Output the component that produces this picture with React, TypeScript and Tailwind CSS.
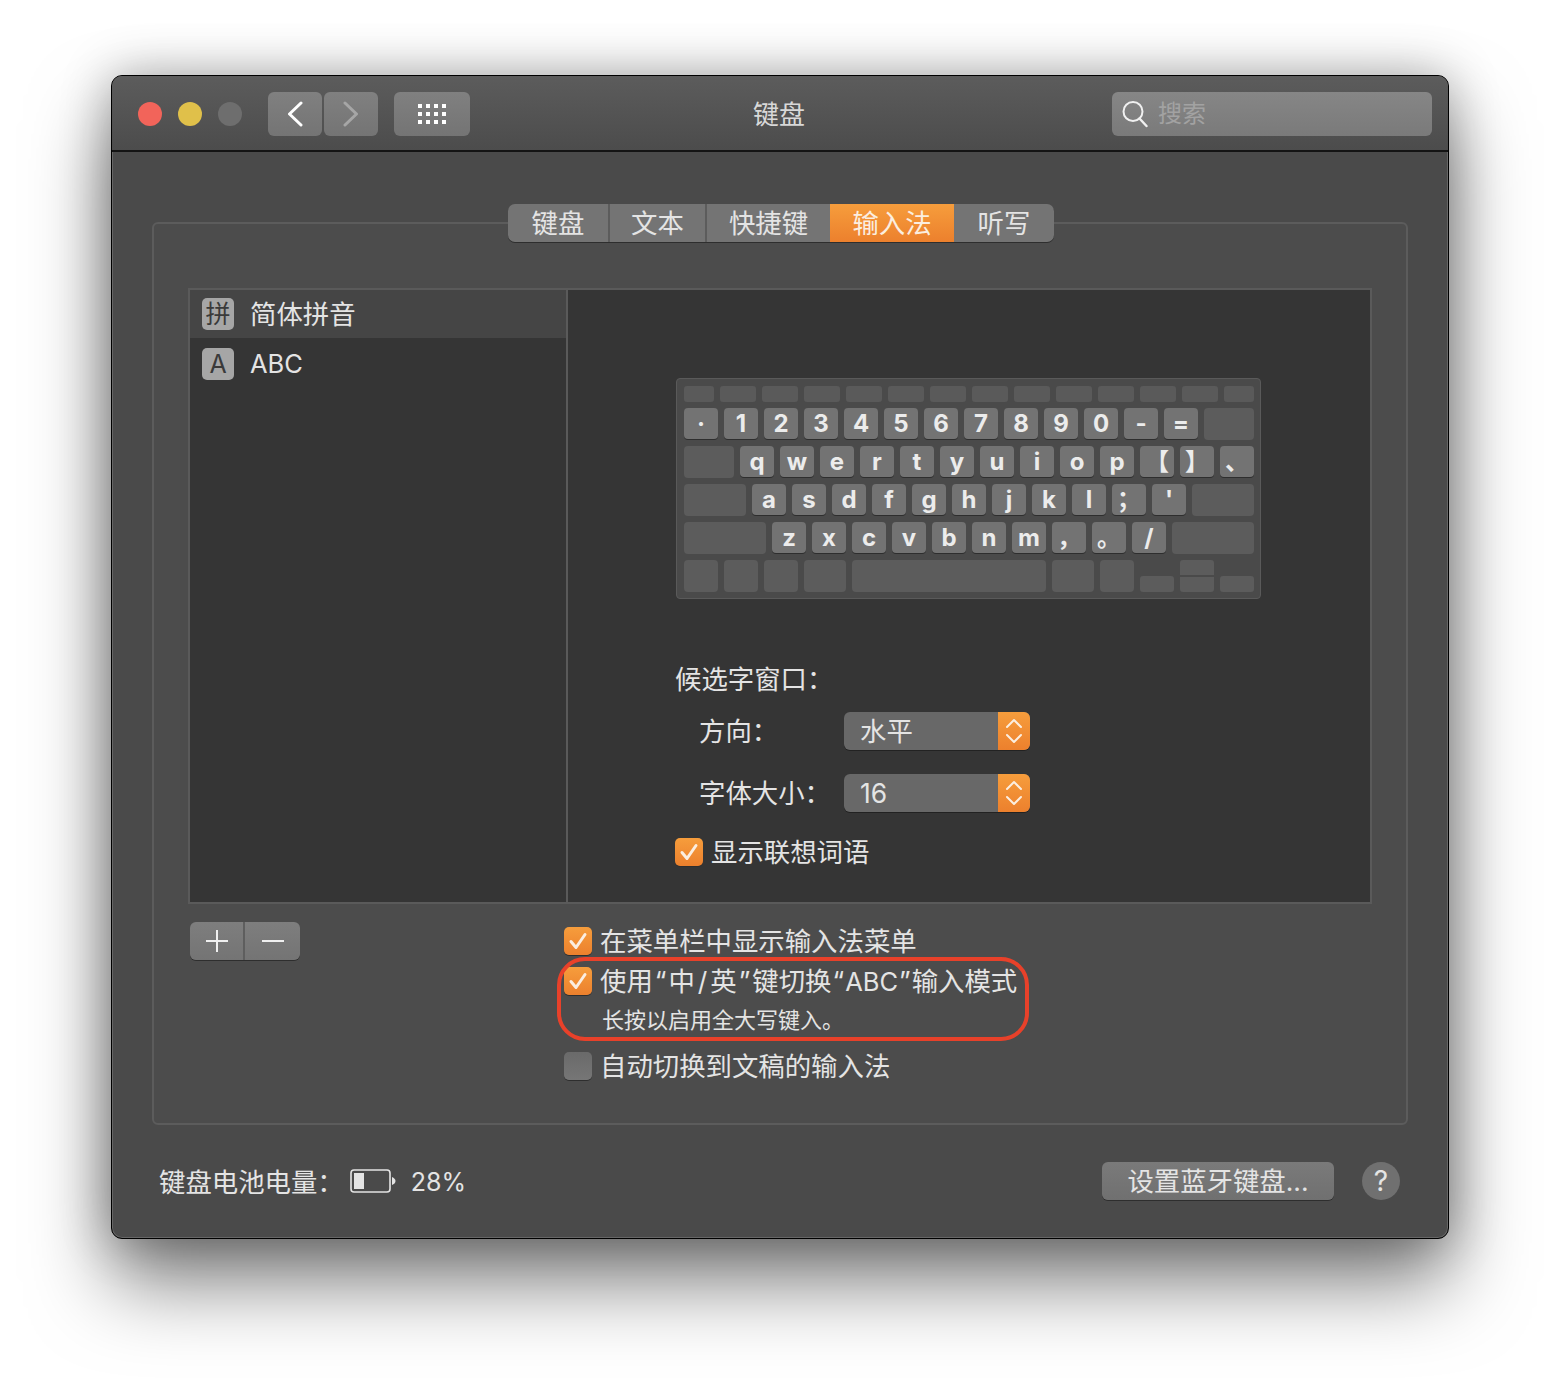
import React from 'react';

const fnKeys = ['w-[30px]', 'w-[36px]', 'w-[36px]', 'w-[36px]', 'w-[36px]', 'w-[36px]', 'w-[36px]', 'w-[36px]', 'w-[36px]', 'w-[36px]', 'w-[36px]', 'w-[36px]', 'w-[36px]', 'w-[30px]'];

const Key = ({ label }: { label: string }) => (
  <div className="flex h-[31px] w-[34px] shrink-0 items-center justify-center rounded-[4px] bg-[#737373] text-[24px] font-bold leading-none text-[#ececec] shadow-[0_1px_0_#2e2e2e]">
    {label}
  </div>
);

const BlankKey = ({ className }: { className: string }) => (
  <div className={`h-[32px] shrink-0 rounded-[4px] bg-[#5c5c5c] ${className}`} />
);

const Keyboard = () => (
  <div className="flex h-[221px] w-[585px] flex-col rounded-[4px] border border-[#5a5a5a] bg-[#4a4a4a] pl-[7px] pr-[6px] pt-[7px]">
    <div className="flex gap-[6px]">
      {fnKeys.map((w, i) => (
        <div key={i} className={`h-[16px] shrink-0 rounded-[3px] bg-[#5a5a5a] ${w}`} />
      ))}
    </div>
    <div className="mt-[6px] flex gap-[6px]">
      {['·', '1', '2', '3', '4', '5', '6', '7', '8', '9', '0', '-', '='].map(k => (
        <Key key={k} label={k} />
      ))}
      <BlankKey className="w-[50px]" />
    </div>
    <div className="mt-[6px] flex gap-[6px]">
      <BlankKey className="w-[50px]" />
      {['q', 'w', 'e', 'r', 't', 'y', 'u', 'i', 'o', 'p', '【', '】', '、'].map(k => (
        <Key key={k} label={k} />
      ))}
    </div>
    <div className="mt-[6px] flex gap-[6px]">
      <BlankKey className="w-[62px]" />
      {['a', 's', 'd', 'f', 'g', 'h', 'j', 'k', 'l', '；', "'"].map(k => (
        <Key key={k} label={k} />
      ))}
      <BlankKey className="w-[62px]" />
    </div>
    <div className="mt-[6px] flex gap-[6px]">
      <BlankKey className="w-[82px]" />
      {['z', 'x', 'c', 'v', 'b', 'n', 'm', '，', '。', '/'].map(k => (
        <Key key={k} label={k} />
      ))}
      <BlankKey className="w-[82px]" />
    </div>
    <div className="mt-[6px] flex items-end gap-[6px]">
      <BlankKey className="w-[34px]" />
      <BlankKey className="w-[34px]" />
      <BlankKey className="w-[34px]" />
      <BlankKey className="w-[42px]" />
      <BlankKey className="w-[194px]" />
      <BlankKey className="w-[42px]" />
      <BlankKey className="w-[34px]" />
      <div className="h-[16px] w-[34px] shrink-0 rounded-[3px] bg-[#5c5c5c]" />
      <div className="flex w-[34px] shrink-0 flex-col gap-[2px]">
        <div className="h-[15px] rounded-t-[3px] bg-[#5c5c5c]" />
        <div className="h-[15px] rounded-b-[3px] bg-[#5c5c5c]" />
      </div>
      <div className="h-[16px] w-[34px] shrink-0 rounded-[3px] bg-[#5c5c5c]" />
    </div>
  </div>
);

const Check = ({ checked = true }: { checked?: boolean }) =>
  checked ? (
    <div className="flex h-[28px] w-[28px] shrink-0 items-center justify-center rounded-[5px] bg-gradient-to-b from-[#f69d3c] to-[#ec802d] shadow-[0_1px_0_#2e2e2e]">
      <svg width="20" height="20" viewBox="0 0 20 20" fill="none">
        <path d="M3 10.5l5 6 9-13" stroke="#fbeee0" strokeWidth="3" strokeLinecap="round" strokeLinejoin="round" />
      </svg>
    </div>
  ) : (
    <div className="h-[28px] w-[28px] shrink-0 rounded-[5px] bg-gradient-to-b from-[#6a6a6a] to-[#767676] shadow-[0_1px_0_#2e2e2e]" />
  );

const Select = ({ value }: { value: string }) => (
  <div className="flex h-[38px] w-[186px] overflow-hidden rounded-[6px] bg-[#686868] shadow-[0_1px_0_#222]">
    <div className="flex flex-1 items-center pl-[16px] text-[26.4px] leading-none text-[#e4e4e4]">{value}</div>
    <div className="flex w-[32px] items-center justify-center bg-gradient-to-b from-[#f69d3c] to-[#ec802d]">
      <svg width="18" height="28" viewBox="0 0 18 28" fill="none">
        <path d="M2 10l7-7 7 7M2 18l7 7 7-7" stroke="#fbeee0" strokeWidth="2" strokeLinecap="round" strokeLinejoin="round" />
      </svg>
    </div>
  </div>
);

const tabs = [
  { label: '键盘', w: 'w-[102px]' },
  { label: '文本', w: 'w-[97px]' },
  { label: '快捷键', w: 'w-[123px]' },
  { label: '输入法', w: 'w-[124px]', active: true },
  { label: '听写', w: 'w-[100px]' },
];

export default function App() {
  return (
    <div className="h-[1386px] w-[1560px] overflow-hidden bg-white pl-[111px] pt-[75px] font-['Inter','Noto_Sans_CJK_SC',sans-serif] text-[#e4e4e4]">
      <div className="h-[1164px] w-[1338px] overflow-hidden rounded-[11px] border border-black bg-[#4a4a4a] shadow-[inset_0_0_0_1px_#666666,0_44px_80px_rgba(0,0,0,0.5),0_0_50px_rgba(0,0,0,0.3)]">
        {/* Title bar */}
        <div className="grid h-[76px] grid-cols-[1fr_auto_1fr] items-center border-b-2 border-[#141414] bg-gradient-to-b from-[#5c5c5c] to-[#4c4c4c] pl-[26px] pr-[16px] pt-[2px]">
          <div className="flex items-center">
            <div className="h-[24px] w-[24px] rounded-full bg-[#f2645a]" />
            <div className="ml-[16px] h-[24px] w-[24px] rounded-full bg-[#e0c04a]" />
            <div className="ml-[16px] h-[24px] w-[24px] rounded-full bg-[#6e6e6e]" />
            <div className="ml-[26px] flex h-[44px] w-[54px] items-center justify-center rounded-[6px] bg-gradient-to-b from-[#808080] to-[#747474]">
              <svg width="18" height="26" viewBox="0 0 18 26" fill="none">
                <path d="M15 2L3.5 13 15 24" stroke="#ffffff" strokeWidth="3" strokeLinecap="round" strokeLinejoin="round" />
              </svg>
            </div>
            <div className="ml-[2px] flex h-[44px] w-[54px] items-center justify-center rounded-[6px] bg-gradient-to-b from-[#808080] to-[#747474]">
              <svg width="18" height="26" viewBox="0 0 18 26" fill="none">
                <path d="M3 2l11.5 11L3 24" stroke="#a6a6a6" strokeWidth="3" strokeLinecap="round" strokeLinejoin="round" />
              </svg>
            </div>
            <div className="ml-[16px] flex h-[44px] w-[76px] items-center justify-center rounded-[6px] bg-gradient-to-b from-[#808080] to-[#747474]">
              <svg width="28" height="20" viewBox="0 0 28 20" fill="#ffffff">
                <rect x="0" y="0" width="4" height="4" />
                <rect x="8" y="0" width="4" height="4" />
                <rect x="16" y="0" width="4" height="4" />
                <rect x="24" y="0" width="4" height="4" />
                <rect x="0" y="8" width="4" height="4" />
                <rect x="8" y="8" width="4" height="4" />
                <rect x="16" y="8" width="4" height="4" />
                <rect x="24" y="8" width="4" height="4" />
                <rect x="0" y="16" width="4" height="4" />
                <rect x="8" y="16" width="4" height="4" />
                <rect x="16" y="16" width="4" height="4" />
                <rect x="24" y="16" width="4" height="4" />
              </svg>
            </div>
          </div>
          <div className="mr-[12px] pt-[2px] text-[26px] leading-none text-[#d8d8d8]">键盘</div>
          <div className="flex justify-end">
            <div className="flex h-[44px] w-[320px] items-center rounded-[6px] bg-gradient-to-b from-[#868686] to-[#7a7a7a] pl-[10px]">
              <svg width="26" height="28" viewBox="0 0 26 28" fill="none">
                <circle cx="11" cy="11.5" r="9.5" stroke="#f0f0f0" strokeWidth="2" />
                <path d="M17.5 18.5l7 7.5" stroke="#f0f0f0" strokeWidth="2.4" strokeLinecap="round" />
              </svg>
              <span className="ml-[10px] text-[24px] leading-none text-[#a2a2a2]">搜索</span>
            </div>
          </div>
        </div>

        {/* Body */}
        <div className="px-[40px] pt-[52px]">
          <div className="relative z-10 -mb-[20px] flex h-[38px] justify-center pl-[2px]">
            <div className="flex overflow-hidden rounded-[7px] bg-[#747474] shadow-[0_1px_0_#2e2e2e]">
              {tabs.map((t, i) => (
                <div
                  key={t.label}
                  className={`flex items-center justify-center text-[26.4px] leading-none ${t.w} ${
                    t.active
                      ? 'bg-gradient-to-b from-[#f69d3c] to-[#ec802d] text-[#fbeee0]'
                      : i < 2
                        ? 'border-r-2 border-[#5c5c5c]'
                        : ''
                  }`}
                >
                  {t.label}
                </div>
              ))}
            </div>
          </div>

          <div className="h-[903px] rounded-[6px] border-2 border-[#5c5c5c] bg-[#4c4c4c] px-[34px] pt-[64px]">
            {/* Input sources panel */}
            <div className="flex h-[616px] border-2 border-[#5a5a5a] bg-[#353535]">
              <div className="w-[376px] shrink-0">
                <div className="flex h-[48px] items-center bg-[#454545] pl-[12px]">
                  <div className="flex h-[32px] w-[32px] items-center justify-center rounded-[5px] bg-[#a6a6a6] text-[25px] leading-none text-[#3a3a3a]">拼</div>
                  <span className="ml-[16px] text-[26.4px] leading-none">简体拼音</span>
                </div>
                <div className="mt-[2px] flex h-[48px] items-center pl-[12px]">
                  <div className="flex h-[32px] w-[32px] items-center justify-center rounded-[5px] bg-[#a6a6a6] text-[25px] leading-none text-[#3a3a3a]">A</div>
                  <span className="ml-[16px] text-[25.5px] leading-none">ABC</span>
                </div>
              </div>
              <div className="flex-1 border-l-2 border-[#5a5a5a] pl-[108px] pt-[88px]">
                <Keyboard />
                <div className="-ml-[1px] mt-[62px] flex h-[36px] items-center text-[26.4px] leading-none">候选字窗口：</div>
                <div className="mt-[15px] flex items-center pl-[23px]">
                  <div className="w-[145px] text-[26.4px] leading-none">方向：</div>
                  <Select value="水平" />
                </div>
                <div className="mt-[24px] flex items-center pl-[23px]">
                  <div className="w-[145px] text-[26.4px] leading-none">字体大小：</div>
                  <Select value="16" />
                </div>
                <div className="-ml-[1px] mt-[26px] flex items-center">
                  <Check />
                  <span className="ml-[8px] text-[26.4px] leading-none">显示联想词语</span>
                </div>
              </div>
            </div>

            {/* Options under panel */}
            <div className="mt-[18px] flex pl-[2px]">
              <div className="flex h-[38px] w-[110px] overflow-hidden rounded-[6px] bg-gradient-to-b from-[#7e7e7e] to-[#747474] shadow-[0_1px_0_#2e2e2e]">
                <div className="flex w-[55px] items-center justify-center border-r-2 border-[#5e5e5e]">
                  <svg width="24" height="24" viewBox="0 0 24 24" fill="none">
                    <path d="M12 1v22M1 12h22" stroke="#f0f0f0" strokeWidth="2" />
                  </svg>
                </div>
                <div className="flex flex-1 items-center justify-center">
                  <svg width="24" height="24" viewBox="0 0 24 24" fill="none">
                    <path d="M1 12h22" stroke="#f0f0f0" strokeWidth="2" />
                  </svg>
                </div>
              </div>
              <div className="ml-[264px] pt-[5px]">
                <div className="flex h-[28px] items-center">
                  <Check />
                  <span className="ml-[8px] text-[26.4px] leading-none">在菜单栏中显示输入法菜单</span>
                </div>
                <div className="relative mt-[12px]">
                  <div className="flex h-[28px] items-center">
                    <Check />
                    <span className="ml-[8px] text-[26.4px] leading-none">
                      使用<span className="mx-[2px]">“</span>中<span className="mx-[3px]">/</span>英<span className="mx-[2px]">”</span>键切换<span className="mx-[1px]">“</span><span className="text-[25.5px]">ABC</span><span className="mx-[1px]">”</span>输入模式
                    </span>
                  </div>
                  <div className="ml-[38px] mt-[10px] flex h-[30px] items-center text-[22px] leading-none">长按以启用全大写键入。</div>
                  <div className="absolute -left-[7px] -top-[10px] h-[84px] w-[472px] rounded-[28px] border-[4px] border-[#e8412a]" />
                </div>
                <div className="mt-[17px] flex h-[28px] items-center">
                  <Check checked={false} />
                  <span className="ml-[8px] text-[26.4px] leading-none">自动切换到文稿的输入法</span>
                </div>
              </div>
            </div>
          </div>

          {/* Footer */}
          <div className="mt-[37px] flex items-center pl-[7px] pr-[8px]">
            <span className="pt-[2px] text-[26.4px] leading-none">键盘电池电量：</span>
            <svg className="ml-[6px]" width="46" height="24" viewBox="0 0 46 24" fill="none">
              <rect x="1" y="1" width="39" height="22" rx="3" stroke="#e4e4e4" strokeWidth="1.6" />
              <rect x="4" y="4" width="10" height="16" fill="#e4e4e4" />
              <path d="M42 8c2 1 3.5 2 3.5 4s-1.5 3-3.5 4z" fill="#e4e4e4" />
            </svg>
            <span className="ml-[15px] pt-[2px] text-[25px] leading-none">28%</span>
            <div className="ml-auto flex h-[38px] w-[232px] items-center justify-center rounded-[6px] bg-gradient-to-b from-[#7a7a7a] to-[#707070] text-[26.4px] leading-none shadow-[0_1px_0_#2e2e2e]">设置蓝牙键盘...</div>
            <div className="ml-[28px] flex h-[38px] w-[38px] items-center justify-center rounded-full bg-[#707070] text-[28px] leading-none">?</div>
          </div>
        </div>
      </div>
    </div>
  );
}
